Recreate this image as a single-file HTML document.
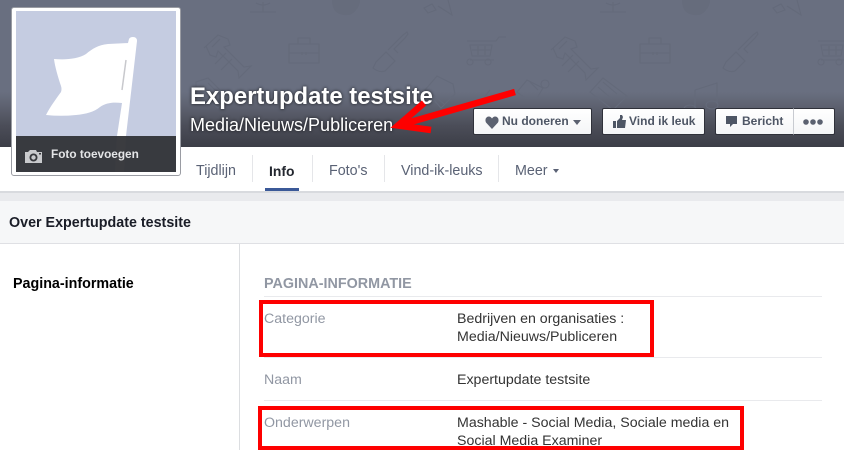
<!DOCTYPE html>
<html><head><meta charset="utf-8"><style>
html,body{margin:0;padding:0;width:844px;height:450px;overflow:hidden;background:#fff;font-family:"Liberation Sans",Arial,sans-serif}
.a{position:absolute;white-space:nowrap}
#cover{position:absolute;left:0;top:0;width:844px;height:147px;background:linear-gradient(#696f80 0,#696f80 92px,#5c606e 108px,#4b4d58 126px,#3c3e47 147px)}
.btn{position:absolute;top:108px;height:27px;box-sizing:border-box;border:1px solid #2f313a;border-radius:2px;background:linear-gradient(#fff,#f4f5f7);color:#4e5665;font:bold 12px/25px "Liberation Sans",Arial,sans-serif;white-space:nowrap}
.tab{position:absolute;top:163px;font-size:14.3px;line-height:16px;color:#5a6275;white-space:nowrap}
.sep{position:absolute;top:155px;width:1px;height:27px;background:#e5e6e9}
.hr{position:absolute;left:264px;width:558px;height:1px;background:#e9eaed}
.lb{position:absolute;left:264px;font-size:14.2px;line-height:18px;color:#9197a3;white-space:nowrap}
.v{position:absolute;left:457px;font-size:14.2px;line-height:18px;color:#333;white-space:nowrap}
.rb{position:absolute;box-sizing:border-box;border:4px solid #fe0000}
</style></head><body>
<div id="cover"></div>
<svg class="a" style="left:0;top:0" width="844" height="147" fill="none" stroke="#646a7a" stroke-width="1.1">
<path d="M204 48l14-13 10 4 2 6-6 2 20 20 7-1-12 12-1-7-20-20-2 6-6-2-4-9M212 47l8-8M226 53l-11 11M232 59l-11 11"/>
<path d="M289 44h30v19h-30zM289 53h30M298 44v-6h12v6M302 52v3M306 52v3"/>
<path d="M376 62l10-10 9 9-10 10q-6 2-12-3zM388 50l5-5 10-10 4-3 1 2-3 4-11 11 4 4"/>
<path d="M467 41h29l3-4h7M470 45h22l-2 11h-18zM472 50h19M478 46v9M485 46v9M470 60h24"/><circle cx="470" cy="62" r="3"/><circle cx="488" cy="62" r="3"/>
<path d="M551 50l14-13 10 4 2 6-6 2 20 20 7-1-12 12-1-7-20-20-2 6-6-2-4-9M559 49l8-8M573 55l-11 11M579 61l-11 11"/>
<path d="M640 44h30v19h-30zM640 53h30M649 44v-6h12v6M653 52v3M657 52v3"/>
<path d="M726 62l10-10 9 9-10 10q-6 2-12-3zM738 50l5-5 10-10 4-3 1 2-3 4-11 11 4 4"/>
<path d="M818 41h29l3-4h7M821 45h22l-2 11h-18zM823 50h19M829 46v9M836 46v9M821 60h24"/><circle cx="821" cy="62" r="3"/><circle cx="839" cy="62" r="3"/>
<path d="M196 82l12-4 20 20-10 10-22-18zM203 86l12 12M208 83l12 12"/>
<path d="M590 92l13-14 24 18-14 14zM598 87l14 12M603 82l14 12"/>
<path d="M695 90l22-7v21M695 90v18"/><ellipse cx="690" cy="109" rx="6" ry="4"/><ellipse cx="712" cy="105" rx="6" ry="4"/>
<path d="M425 90l12-14 16 8 2 10-14 14zM432 94l12 10M490 90l-8 10"/>
<path d="M525 98l-8-6 10-12 16 8-6 10zM530 82l8 8"/><circle cx="545" cy="84" r="4"/>
<path d="M250 12h26M263 12V2M256 3q7 4 14 0"/><path d="M600 12h26M613 12V2M606 3q7 4 14 0"/>
<path d="M332 0q0 14 12 15 8 1 12-5 4-4 4-10" fill="#666c7c" stroke="none"/><path d="M682 0q0 14 12 15 8 1 12-5 4-4 4-10" fill="#666c7c" stroke="none"/>
<path d="M424 8l8-4 4 6-8 3zM438 6l14 9-4-15M773 8l8-4 4 6-8 3zM787 6l14 9-4-15"/>
</svg>

<div class="a" style="left:190px;top:83px;font-size:23.9px;font-weight:bold;line-height:28px;color:#fff;text-shadow:0 0 3px rgba(0,0,0,.8)">Expertupdate testsite</div>
<div class="a" style="left:190px;top:115px;font-size:18px;line-height:20px;color:#fff;text-shadow:0 0 3px rgba(0,0,0,.8)">Media/Nieuws/Publiceren</div>

<div class="a" style="left:0;top:147px;width:844px;height:44px;background:#fff;border-bottom:2px solid #d8dade"></div>
<div class="tab" style="left:196px">Tijdlijn</div>
<div class="sep" style="left:252px"></div>
<div class="tab" style="left:269px;font-weight:bold;color:#23272f;font-size:13.9px">Info</div>
<div class="a" style="left:265px;top:188px;width:34px;height:3px;background:#3b5998"></div>
<div class="sep" style="left:312px"></div>
<div class="tab" style="left:329px">Foto's</div>
<div class="sep" style="left:384px"></div>
<div class="tab" style="left:401px">Vind-ik-leuks</div>
<div class="sep" style="left:498px"></div>
<div class="tab" style="left:515px">Meer</div>
<div class="a" style="left:553px;top:169px;border:3px solid transparent;border-top:4px solid #5a6275;border-bottom:0"></div>

<div class="a" style="left:11px;top:7px;width:170px;height:169px;box-sizing:border-box;background:#fff;border:1px solid #9a9ca3;border-radius:3px"></div>
<div class="a" style="left:16px;top:11px;width:160px;height:161px;background:#c5cce1;overflow:hidden">
<svg width="160" height="161" style="position:absolute;left:0;top:0">
<path d="M38 48C50 49 62 48 70 43C76 38 82 34 92 33L112 32L113 28Q114 26 117 26Q121 26 121 30L110 125L101 125L106 92C96 91 90 92 84 96C78 101 70 103 60 104C50 105 40 105 30 104C34 96 40 88 45 81Q46 78 45 75C42 66 39 56 38 48Z" fill="#fff"/>
<path d="M110 49l-4 30" stroke="#c8c9cd" stroke-width="1.5"/>
<path d="M101 125h9l-2 36h-9z" fill="#fff"/>
</svg>
<div style="position:absolute;left:0;top:125px;width:160px;height:36px;background:rgba(48,49,54,.95)"></div>
<svg width="18" height="14" style="position:absolute;left:9px;top:138px"><path d="M0 3h3l2-2h6l1 2h5v11H0z" fill="#c9cacd"/><circle cx="8.500" cy="8.500" r="4" fill="#37383c"/><circle cx="8.500" cy="8.500" r="2.200" fill="#c9cacd"/><rect x="14" y="4" width="2" height="1.500" fill="#37383c"/></svg>
<div style="position:absolute;left:35px;top:135px;font-size:11.8px;font-weight:bold;line-height:16px;color:#e4e5e7;white-space:nowrap">Foto toevoegen</div>
</div>

<div class="btn" style="left:473px;width:119px">
<svg width="14" height="13" style="position:absolute;left:11px;top:7px"><path d="M7 13L1 6.500Q-.5 3 2 1q3-1.500 5 1.500Q9-.5 12 1q2.500 2 1 5.500z" fill="#5b6170"/></svg>
<span style="position:absolute;left:28px">Nu doneren</span>
<span style="position:absolute;left:99px;top:11px;border:4px solid transparent;border-top:5px solid #5b6170;border-bottom:0"></span></div>
<div class="btn" style="left:602px;width:103px">
<svg width="13" height="13" style="position:absolute;left:10px;top:6px"><path d="M0 6h3v7H0zM4 6l3-3V0h2l1 2-1 3h4l-1 8H4z" fill="#4e5665"/></svg>
<span style="position:absolute;left:26px">Vind ik leuk</span></div>
<div class="btn" style="left:715px;width:79px;border-radius:2px 0 0 2px;border-right:1px solid #c8cbd1">
<svg width="12" height="13" style="position:absolute;left:10px;top:7px"><path d="M0 0h11v8H7l-3 3V8H0z" fill="#4e5665"/></svg>
<span style="position:absolute;left:26px">Bericht</span></div>
<div class="btn" style="left:794px;width:41px;border-left:0;border-radius:0 2px 2px 0">
<svg width="20" height="6" style="position:absolute;left:9px;top:10px" fill="#5b6170"><circle cx="3" cy="3" r="2.800"/><circle cx="10" cy="3" r="2.800"/><circle cx="17" cy="3" r="2.800"/></svg></div>

<div class="a" style="left:0;top:193px;width:844px;height:9px;background:#e9eaed;border-bottom:1px solid #dcdee1;box-sizing:border-box"></div>
<div class="a" style="left:0;top:201px;width:844px;height:43px;background:#f6f7f8;border-bottom:1px solid #dfe0e4;box-sizing:border-box"></div>
<div class="a" style="left:9px;top:214px;font-size:14.3px;font-weight:bold;line-height:18px;color:#1a1d27">Over Expertupdate testsite</div>
<div class="a" style="left:239px;top:244px;width:1px;height:206px;background:#dcdee1"></div>
<div class="a" style="left:13px;top:275px;font-size:14.3px;font-weight:bold;line-height:18px;color:#000">Pagina-informatie</div>
<div class="a" style="left:264px;top:275px;font-size:14.35px;font-weight:bold;line-height:18px;color:#9197a3">PAGINA-INFORMATIE</div>
<div class="hr" style="top:296px"></div>
<div class="hr" style="top:357px"></div>
<div class="hr" style="top:400px"></div>
<div class="lb" style="top:310px">Categorie</div>
<div class="v" style="top:310px">Bedrijven en organisaties :</div>
<div class="v" style="top:328px">Media/Nieuws/Publiceren</div>
<div class="lb" style="top:371px">Naam</div>
<div class="v" style="top:371px">Expertupdate testsite</div>
<div class="lb" style="top:414px">Onderwerpen</div>
<div class="v" style="top:414px">Mashable - Social Media, Sociale media en</div>
<div class="v" style="top:432px">Social Media Examiner</div>
<div class="rb" style="left:259px;top:300px;width:395px;height:57px"></div>
<div class="rb" style="left:258px;top:406px;width:486px;height:44px"></div>

<svg class="a" style="left:0;top:0" width="844" height="150" fill="none" stroke="#fe0000" stroke-width="6.500">
<path d="M515 92L400 125"/><path d="M424 103L398 125.500L431 130"/></svg>
</body></html>
